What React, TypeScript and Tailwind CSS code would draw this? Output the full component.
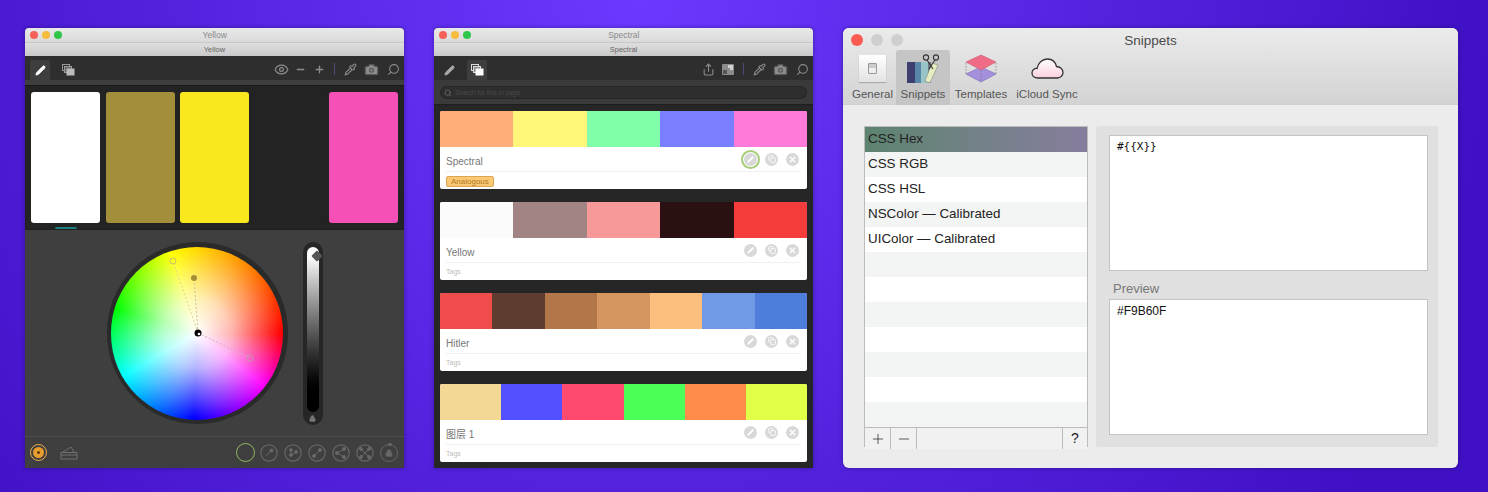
import { Camera, Copy, Eye, Lock, Minus, Pencil, Pipette, Plus, Search, Share, X } from 'lucide-react';
import type { ReactNode } from 'react';

const palettes = [
  { name: 'Spectral', colors: ['#ffae7a', '#fff67a', '#80ffa8', '#7a7fff', '#ff7ad9'], tag: 'Analogous', active: true },
  { name: 'Yellow', colors: ['#fbfbfb', '#a38484', '#f79999', '#2a1010', '#f53c3c'] },
  { name: 'Hitler', colors: ['#f04c4c', '#5e3d30', '#b37648', '#d69660', '#fcbf7e', '#7099e6', '#4f7ddb'] },
  { name: '图层 1', colors: ['#f2d795', '#5250ff', '#ff4a70', '#4cff58', '#ff8c4a', '#e2ff47'] },
];

const rows = ['CSS Hex', 'CSS RGB', 'CSS HSL', 'NSColor — Calibrated', 'UIColor — Calibrated', '', '', '', '', '', '', ''];

function LayersIcon({ active }: { active?: boolean }) {
  return (
    <svg width="13" height="12" viewBox="0 0 13 12">
      <rect x="0.5" y="0.5" width="7" height="6" fill="none" stroke={active ? '#ddd' : '#999'} />
      <rect x="2.5" y="2.5" width="7" height="6" fill={active ? '#888' : '#666'} stroke={active ? '#ddd' : '#999'} />
      <rect x="4.5" y="4.5" width="8" height="7" fill={active ? '#fff' : '#bbb'} />
    </svg>
  );
}

function ToolbarRight({ left }: { left: ReactNode }) {
  return (
    <div className="ml-auto mr-[4px] flex items-center pt-[2px] text-[#8c8c8c]">
      {left}
      <div className="ml-[9px] mr-[9px] h-[12px] w-px bg-[#4a4a78]" />
      <Pipette size={13} className="mr-[7px]" />
      <Camera size={15} fill="#8c8c8c" stroke="#555" className="mr-[8px]" />
      <Search size={13} strokeWidth={2} className="-scale-x-100" />
    </div>
  );
}

function Chrome({ title }: { title: string }) {
  return (
    <>
      <div className="flex h-[14px] items-center bg-gradient-to-b from-[#e9e9e9] to-[#dadada] pl-[5px]">
        <div className="flex gap-[4.5px]">
          <div className="h-[7.5px] w-[7.5px] rounded-full bg-[#f4605a]" />
          <div className="h-[7.5px] w-[7.5px] rounded-full bg-[#f7bc3c]" />
          <div className="h-[7.5px] w-[7.5px] rounded-full bg-[#2fc64a]" />
        </div>
        <div className="flex-1 pr-[36px] text-center text-[8.5px] leading-none text-[#8a8a8a]">{title}</div>
      </div>
      <div className="h-[14px] border-t border-[#c8c8c8] bg-gradient-to-b from-[#dedede] to-[#c9c9c9] text-center text-[7.5px] leading-[13px] text-[#666]">
        {title}
      </div>
    </>
  );
}

function Tabs({ second, right }: { second?: boolean; right: ReactNode }) {
  return (
    <div className="flex h-[24px] bg-[#2e2e2e]">
      <div className="ml-[5px] mt-[4px] flex gap-[8px]">
        <div className={`flex h-[20px] w-[20px] items-center justify-center rounded-t-[2px] ${second ? '' : 'bg-[#3e3e3e]'}`}>
          <Pencil size={11} fill={second ? '#aaa' : '#fff'} stroke={second ? '#aaa' : '#fff'} />
        </div>
        <div className={`flex h-[20px] w-[20px] items-center justify-center rounded-t-[2px] ${second ? 'bg-[#3e3e3e]' : ''}`}>
          <LayersIcon active={second} />
        </div>
      </div>
      <ToolbarRight left={right} />
    </div>
  );
}

function Ring({ children }: { children: ReactNode }) {
  return (
    <svg width="18" height="18" viewBox="0 0 18 18" fill="none" stroke="#656565">
      <circle cx="9" cy="9" r="8.2" strokeWidth="1.2" />
      <g stroke="#686868" fill="#686868" strokeWidth="1">
        {children}
      </g>
    </svg>
  );
}

function HarmonyBar() {
  return (
    <div className="flex items-center gap-[6px]">
      <div className="mr-[-1px] h-[19px] w-[19px] rounded-full border-[1.5px] border-[#8fb85c]" />
      <Ring>
        <path d="M6 12 L11 7" />
        <circle cx="11.5" cy="6.5" r="1.5" />
      </Ring>
      <Ring>
        <path d="M7 6 V11 L12 8" fill="none" />
        <circle cx="7" cy="6" r="1.4" />
        <circle cx="7" cy="11" r="1.4" />
        <circle cx="12" cy="8" r="1.4" />
      </Ring>
      <Ring>
        <path d="M6 12 L12 6" />
        <circle cx="12" cy="6" r="1.5" />
        <circle cx="6" cy="12" r="1.5" />
      </Ring>
      <Ring>
        <path d="M5 9 L12 5 M5 9 L12 13" fill="none" />
        <circle cx="5" cy="9" r="1.5" />
        <circle cx="12" cy="5" r="1.5" />
        <circle cx="12" cy="13" r="1.5" />
      </Ring>
      <Ring>
        <path d="M5 5 L13 13 M13 5 L5 13" />
        <circle cx="5" cy="5" r="1.4" />
        <circle cx="13" cy="5" r="1.4" />
        <circle cx="5" cy="13" r="1.4" />
        <circle cx="13" cy="13" r="1.4" />
      </Ring>
      <div className="relative flex h-[18px] w-[18px] items-center justify-center rounded-full border-[1.2px] border-[#656565]">
        <Lock size={8} fill="#686868" stroke="#686868" />
        <div className="absolute -top-[2px] left-[7px] h-[3px] w-[4px] rounded-full bg-[#686868]" />
      </div>
    </div>
  );
}

function ColorWheel() {
  return (
    <div className="relative h-[182px] w-[181px] rounded-full bg-[#2a2a2a] p-[4.5px]">
      <div className="h-full w-full rounded-full bg-[radial-gradient(closest-side,#ffffff_0%,rgba(255,255,255,0.7)_40%,rgba(255,255,255,0.28)_75%,rgba(255,255,255,0)_98%),conic-gradient(from_90deg,#ff0000_0deg,#ff00ff_38deg,#0000ff_92deg,#00ffff_150deg,#00ff00_197deg,#ffff00_252deg,#ff8c00_305deg,#ff0000_360deg)]" />
      <svg className="absolute inset-0" width="181" height="182" viewBox="0 0 181 182" fill="none">
        <path d="M91 91 L66 19" stroke="#d8d09a" strokeWidth="1" strokeDasharray="2 2" />
        <path d="M91 91 L87 36" stroke="#c9c29a" strokeWidth="1" strokeDasharray="2 2" />
        <path d="M91 91 L143 116" stroke="#d9a8c8" strokeWidth="1" strokeDasharray="2 2" />
        <circle cx="66" cy="19" r="3" stroke="#c9bd6a" />
        <circle cx="87" cy="36" r="3" fill="#a39039" />
        <circle cx="143" cy="116" r="3" stroke="#c791b3" />
        <circle cx="91" cy="91" r="3.5" fill="#000" />
        <circle cx="92" cy="92" r="1.3" fill="#fff" />
      </svg>
    </div>
  );
}

function ValueSlider() {
  return (
    <div className="relative flex h-[183px] w-[20px] flex-col items-center rounded-full bg-[#262626] pt-[5px]">
      <div className="h-[165px] w-[12px] rounded-full bg-gradient-to-b from-white from-[5%] to-black to-[92%]" />
      <Lock size={7} fill="#777" stroke="#777" className="mt-[3px]" />
      <div className="absolute right-[2px] top-[10px] h-[8px] w-[8px] rotate-45 rounded-[1px] bg-[#555]" />
    </div>
  );
}

function WheelWindow() {
  return (
    <div className="flex h-[440px] w-[379px] flex-col overflow-hidden rounded-t-[4px] bg-[#3f3f3f] shadow-[0_0_4px_rgba(30,10,90,0.5)]">
      <Chrome title="Yellow" />
      <Tabs
        right={
          <>
            <Eye size={15} className="mr-[6px]" />
            <Minus size={11} strokeWidth={3} className="mr-[8px]" />
            <Plus size={11} strokeWidth={3} />
          </>
        }
      />
      <div className="h-[5px] bg-[#3e3e3e]" />
      <div className="relative flex h-[144px] gap-[5.5px] border-t border-[#191919] bg-[#232323] px-[6px] pt-[6px]">
        <div className="h-[131px] w-[69px] rounded-[3px] bg-white" />
        <div className="h-[131px] w-[69px] rounded-[3px] bg-[#a38f3b]" />
        <div className="h-[131px] w-[69px] rounded-[3px] bg-[#f9e81e]" />
        <div className="h-[131px] w-[69px] rounded-[3px] bg-[#232323]" />
        <div className="h-[131px] w-[69px] rounded-[3px] bg-[#f550b5]" />
        <div className="absolute bottom-0 left-[30px] h-[2px] w-[22px] rounded-t-full bg-[#1f8080]" />
      </div>
      <div className="flex h-[207px] justify-center gap-[15px] border-t border-[#1e1e1e] pt-[12px]">
        <ColorWheel />
        <ValueSlider />
      </div>
      <div className="flex h-[32px] items-center border-t border-[#4c4c4c] pl-[5px] pr-[6px]">
        <div className="flex h-[17px] w-[17px] items-center justify-center rounded-full border-[1.5px] border-[#f2b04e]">
          <div className="flex h-[11px] w-[11px] items-center justify-center rounded-full bg-[#e89c2e]">
            <div className="h-[3px] w-[3px] rounded-full bg-[#5a3a10]" />
          </div>
        </div>
        <svg className="ml-[13px]" width="18" height="14" viewBox="0 0 18 14" fill="none" stroke="#707070">
          <path d="M1 6.5 H17 V13 H1 Z M3 6 L11 1 L14 6 M1 9 H17" />
        </svg>
        <div className="ml-auto">
          <HarmonyBar />
        </div>
      </div>
    </div>
  );
}

function RoundAction({ children }: { children: ReactNode }) {
  return <div className="flex h-[13px] w-[13px] items-center justify-center rounded-full bg-[#d8d8d8] text-white">{children}</div>;
}

function PaletteCard({ name, colors, tag, active }: { name: string; colors: string[]; tag?: string; active?: boolean }) {
  return (
    <div className="flex h-[78px] flex-col overflow-hidden rounded-[2px] bg-white">
      <div className="flex h-[36px] shrink-0">
        {colors.map((c) => (
          <div key={c} className="flex-1" style={{ backgroundColor: c }} />
        ))}
      </div>
      <div className="mx-[6px] flex h-[25px] shrink-0 items-center border-b border-[#f0f0f0]">
        <span className="pt-[5px] text-[10px] text-[#777]">{name}</span>
        <div className="ml-auto mr-[2px] flex items-center gap-[8px]">
          <div className={active ? 'rounded-full border-2 border-[#a6cc78] p-[1px] -m-[3px]' : ''}>
            <RoundAction>
              <Pencil size={7} fill="#fff" />
            </RoundAction>
          </div>
          <RoundAction>
            <Copy size={8} strokeWidth={2.5} />
          </RoundAction>
          <RoundAction>
            <X size={9} strokeWidth={3.5} />
          </RoundAction>
        </div>
      </div>
      <div className="flex flex-1 items-center px-[6px] pt-[1px]">
        {tag ? (
          <span className="rounded-[2px] border border-[#dca552] bg-[#fbc873] px-[4px] text-[8px] leading-[9px] text-[#b3781f]">{tag}</span>
        ) : (
          <span className="text-[7px] text-[#bdbdbd]">Tags</span>
        )}
      </div>
    </div>
  );
}

function PaletteWindow() {
  return (
    <div className="flex h-[440px] w-[379px] flex-col overflow-hidden rounded-t-[4px] bg-[#262626] shadow-[0_0_4px_rgba(30,10,90,0.5)]">
      <Chrome title="Spectral" />
      <Tabs
        second
        right={
          <>
            <Share size={13} className="mr-[7px]" />
            <svg width="12" height="11" viewBox="0 0 12 11">
              <rect width="12" height="11" rx="1" fill="#8c8c8c" />
              <path d="M6 1 H11 V6 H8 V4 H6 Z" fill="#d0d0d0" />
              <rect x="1" y="6" width="4" height="4" fill="#555" />
            </svg>
          </>
        }
      />
      <div className="h-[25px] border-b border-[#1e1e1e] bg-[#3a3a3a] px-[6px] pt-[6px]">
        <div className="flex h-[13px] items-center gap-[3px] rounded-full border border-[#262626] bg-[#2e2e2e] pl-[3px] text-[6.5px] text-[#4a4a4a]">
          <Search size={8} className="text-[#777]" />
          Search for this in page
        </div>
      </div>
      <div className="flex flex-col gap-[13px] px-[6px] pt-[6px]">
        {palettes.map((p) => (
          <PaletteCard key={p.name} {...p} />
        ))}
      </div>
    </div>
  );
}

function GeneralIcon() {
  return (
    <div className="flex h-[27px] w-[27px] items-center justify-center bg-gradient-to-b from-white to-[#e3e3e3] shadow-[0_1px_1px_#aaa]">
      <div className="flex h-[11px] w-[9px] items-end rounded-[1px] border border-[#999] bg-[#ccc]">
        <div className="h-[5px] w-full bg-[#eee]" />
      </div>
    </div>
  );
}

function SnippetsIcon() {
  return (
    <svg width="32" height="29" viewBox="0 0 32 29">
      <rect x="0" y="8" width="8" height="21" fill="#3d3f70" />
      <rect x="8" y="8" width="6" height="21" fill="#5a86a8" />
      <rect x="14" y="8" width="7" height="21" fill="#98c4c8" />
      <rect x="21" y="8" width="3" height="21" fill="#6e7a8a" />
      <path d="M23 29 L18 27 L25 9 L31 11 Z" fill="#e6edc0" stroke="#888" strokeWidth="0.6" />
      <circle cx="19" cy="3.5" r="2.6" fill="none" stroke="#333" strokeWidth="1.1" />
      <circle cx="29" cy="3.5" r="2.6" fill="none" stroke="#333" strokeWidth="1.1" />
      <path d="M20 6 L26 15 M28 6 L22 15" stroke="#333" strokeWidth="1.1" />
    </svg>
  );
}

function TemplatesIcon() {
  return (
    <svg width="32" height="29" viewBox="0 0 32 29">
      <path d="M16 13 L31 20 L16 28 L1 20 Z" fill="#a590dd" stroke="#7a68b8" strokeWidth="0.6" />
      <path d="M1 9 V20 M16 16 V28 M31 9 V20" stroke="#777" strokeWidth="0.7" strokeDasharray="1.5 1.5" />
      <path d="M16 1 L31 8 L16 16 L1 8 Z" fill="#ef6b86" stroke="#c95a74" strokeWidth="0.6" />
    </svg>
  );
}

function CloudIcon() {
  return (
    <svg width="33" height="21" viewBox="0 0 33 21">
      <defs>
        <linearGradient id="cloud" x1="0" y1="0" x2="0" y2="1">
          <stop offset="0" stopColor="#ffffff" />
          <stop offset="1" stopColor="#f9cfe0" />
        </linearGradient>
      </defs>
      <path
        d="M7 20 C3 20 1 17.5 1 15 C1 12 3.5 10 6 10.5 C7 5 11 1 16.5 1 C21.5 1 24.5 4.5 25.5 8.5 C29 8.5 32 11 32 14.5 C32 17.5 29.5 20 26.5 20 Z"
        fill="url(#cloud)"
        stroke="#333"
        strokeWidth="1.3"
      />
    </svg>
  );
}

function PrefsTab({ label, width, active, children }: { label: string; width: string; active?: boolean; children: ReactNode }) {
  return (
    <div className={`flex h-[55px] flex-col items-center rounded-t-[3px] ${width} ${active ? 'bg-[#c5c5c5]' : ''}`}>
      <div className="flex h-[37px] items-center justify-center">{children}</div>
      <span className="whitespace-nowrap text-[11.5px] leading-[14px] text-[#555]">{label}</span>
    </div>
  );
}

function SnippetList() {
  return (
    <div className="flex h-[321px] w-[224px] flex-col border border-[#bcbcbc] bg-white">
      {rows.map((r, i) => (
        <div
          key={i}
          className={`h-[25px] shrink-0 pl-[3px] text-[13.4px] leading-[23px] text-[#222] ${
            i === 0 ? 'bg-gradient-to-r from-[#5d8470] to-[#867d9d]' : i % 2 === 1 ? 'bg-[#f3f5f5]' : 'bg-white'
          }`}
        >
          {r}
        </div>
      ))}
      <div className="flex flex-1 border-t border-[#bcbcbc] bg-[#f1f1f1] text-[#222]">
        <div className="flex w-[26px] items-center justify-center border-r border-[#bcbcbc]">
          <Plus size={16} strokeWidth={1.1} />
        </div>
        <div className="flex w-[26px] items-center justify-center border-r border-[#bcbcbc]">
          <Minus size={16} strokeWidth={1.1} />
        </div>
        <div className="flex-1" />
        <div className="flex w-[25px] items-center justify-center border-l border-[#bcbcbc] text-[14px]">?</div>
      </div>
    </div>
  );
}

function SnippetsWindow() {
  return (
    <div className="flex h-[440px] w-[615px] flex-col overflow-hidden rounded-[6px] bg-[#ececec] shadow-[0_0_4px_rgba(30,10,90,0.5)]">
      <div className="h-[77px] border-b border-[#cfcfcf] bg-gradient-to-b from-[#ebebeb] to-[#d3d3d3]">
        <div className="grid h-[22px] grid-cols-[1fr_auto_1fr] items-center px-[8px]">
          <div className="flex gap-[8px]">
            <div className="h-[12px] w-[12px] rounded-full bg-[#fb5a52]" />
            <div className="h-[12px] w-[12px] rounded-full bg-[#cfcfcf]" />
            <div className="h-[12px] w-[12px] rounded-full bg-[#cfcfcf]" />
          </div>
          <div className="pt-[3px] text-[13.5px] text-[#4a4a4a]">Snippets</div>
        </div>
        <div className="flex pl-[6px]">
          <PrefsTab label="General" width="w-[47px]">
            <GeneralIcon />
          </PrefsTab>
          <PrefsTab label="Snippets" width="w-[54px]" active>
            <SnippetsIcon />
          </PrefsTab>
          <PrefsTab label="Templates" width="w-[62px]">
            <TemplatesIcon />
          </PrefsTab>
          <PrefsTab label="iCloud Sync" width="w-[70px]">
            <CloudIcon />
          </PrefsTab>
        </div>
      </div>
      <div className="flex gap-[8px] pl-[21px] pt-[21px]">
        <SnippetList />
        <div className="flex h-[321px] w-[342px] flex-col rounded-[3px] bg-[#e0e0e0] pl-[13px] pr-[10px] pt-[9px]">
          <div className="h-[136px] border border-[#c4c4c4] bg-white px-[7px] pt-[4px] font-['DejaVu_Sans_Mono',monospace] text-[11px] leading-[14px] text-[#111]">
            {'#{{X}}'}
          </div>
          <div className="h-[28px] pl-[4px] pt-[10px] text-[13px] leading-[16px] text-[#777]">Preview</div>
          <div className="h-[136px] border border-[#c4c4c4] bg-white px-[7px] pt-[4px] text-[12px] leading-[14px] text-[#111]">#F9B60F</div>
        </div>
      </div>
    </div>
  );
}

export default function App() {
  return (
    <div className="flex h-[492px] w-[1488px] gap-[30px] overflow-hidden bg-[radial-gradient(ellipse_850px_900px_at_43%_0%,#6c38ff_0%,#4010c4_100%)] pl-[25px] pt-[28px] font-['Liberation_Sans','Noto_Sans_CJK_SC',sans-serif]">
      <WheelWindow />
      <PaletteWindow />
      <SnippetsWindow />
    </div>
  );
}
